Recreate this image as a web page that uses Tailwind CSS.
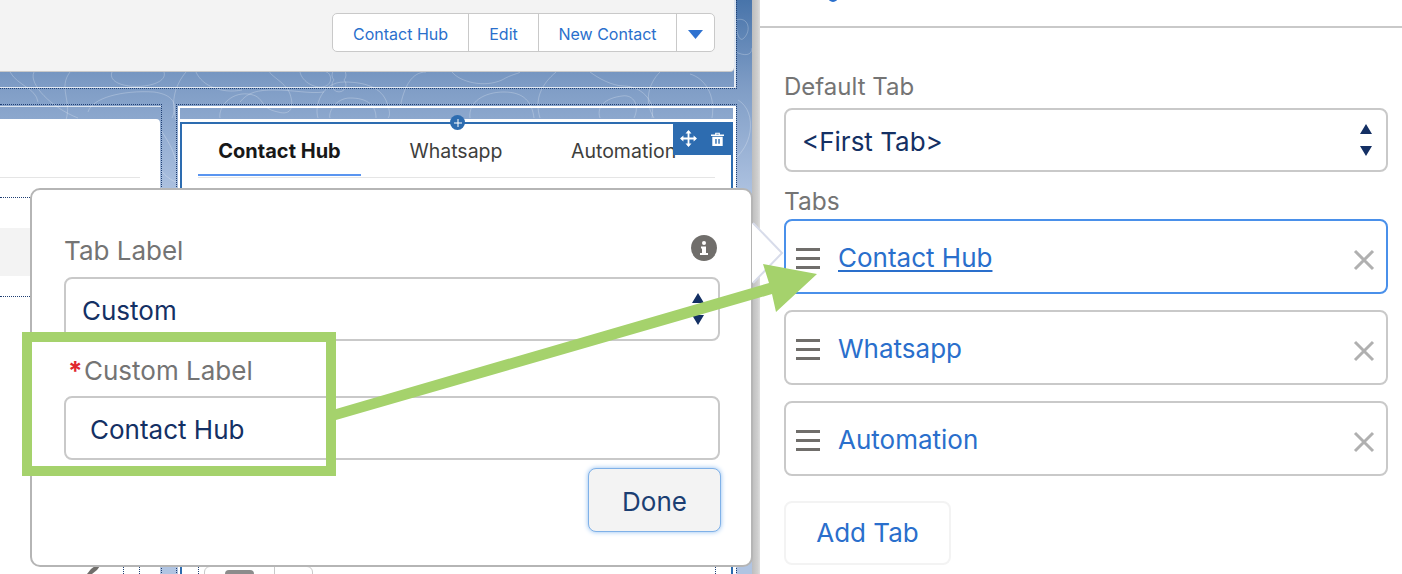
<!DOCTYPE html>
<html lang="en">
<head>
<meta charset="utf-8">
<title>Contact Hub tabs</title>
<script src="https://cdn.jsdelivr.net/npm/@tailwindcss/browser@4"></script>
</head>
<body class="m-0 bg-white">
<div class="relative flex h-[574px] w-[1402px] overflow-hidden bg-white font-['Inter','Liberation_Sans',sans-serif]">

  <!-- Canvas -->
  <main class="relative h-full w-[752px] shrink-0 overflow-hidden bg-[linear-gradient(180deg,#4874aa_0px,#7e9cc5_85px,#b0c4e2_200px,#b0c4e2_100%)]">
    <svg class="absolute left-0 top-0" width="752" height="200" viewBox="0 0 752 200" fill="none" stroke="#ffffff" stroke-opacity=".24" stroke-width="1">
      <path d="M10 72c8 14 26 16 28 30M66 120C72 100 58 88 70 72M34 72c-6 12 18 36 44 46M88 112c4-14 34-22 66-20 14 2 26 8 18 26M112 72c-4 10 12 16 32 14 16-2 22-8 20-14"/>
      <path d="M176 120c-6-20 0-36 10-48M196 72c6 14 26 22 46 18M220 118c-2-10 10-26 28-24 18 2 10 14 30 18 14 4 16-6 12-18-4-12-24-20-20-24"/>
      <path d="M240 102c8-10 18-12 34-12 20 0 36 4 50 2M300 72c2 10 16 18 26 14 8-4 4-14 0-14M334 80a7 7 0 1 0 10 0 7 7 0 1 0-10 0"/>
      <path d="M318 118c-4-12 4-36 26-36 26 0 40 8 44 24 2 6 2 10 0 12M330 118c-2-6 6-20 20-20 16 0 26 6 26 20"/>
      <path d="M400 108c4-22 12-36 26-36M452 72c8 10 32 16 50 8 10-6 16-6 18-8M470 118c-2-16 14-26 34-26 20 0 28 10 30 26"/>
      <path d="M540 118c-6-20 2-34 16-46M590 72c8 6 22 14 34 14 16 0 32 14 28 32M600 118c-4-12 6-20 22-22 12-2 18 10 12 22"/>
      <path d="M660 72c-12 12-16 30-6 46M690 74c14 4 26 20 22 44M736 20c12-4 16 10 8 18-6 6-8-10-8-18M736 52c8 4 16 4 16-4M738 100c10 6 14 18 12 32-2 12-8 20-14 26M161 130c6 10 12 18 15 32M161 170c4 6 10 10 15 12"/>
    </svg>

    <div class="relative h-[89px] w-[737px] border-r border-b border-dotted border-[#1f3f73]">
      <div class="h-[88px] border-r-2 border-b border-white/80">
        <header class="flex h-[72px] justify-end rounded-br-[4px] border-b border-[#c9c9c9] bg-[#f3f3f3] pr-[19px] pt-[13px]">
          <div class="flex h-[39px] overflow-hidden rounded-[5px] border border-[#c9c9c9] bg-white text-[16px] text-[#2a6fcc]">
            <button class="w-[136px] border-r border-[#c9c9c9] pt-[2px]">Contact Hub</button>
            <button class="w-[70px] border-r border-[#c9c9c9] pt-[2px]">Edit</button>
            <button class="w-[138px] border-r border-[#c9c9c9] pt-[2px]">New Contact</button>
            <button class="flex w-[37px] items-center justify-center pt-[4px]">
              <svg width="15" height="9" viewBox="0 0 15 9"><path d="M0 0h15L7.500 9z" fill="#2f72d0"/></svg>
            </button>
          </div>
        </header>
      </div>
    </div>

    <div class="relative mt-[15px] flex h-[471px] w-[737px] gap-[14px]">
      <!-- left column -->
      <section class="h-full w-[162px] border-t border-r border-dotted border-[#1f3f73] pt-[1px]">
        <div class="h-full border-t border-white/70 pr-[1px] pt-[12px]">
          <div class="h-full w-[160px] rounded-tr-[4px] bg-white pt-[58px]">
            <div class="h-px w-[140px] bg-[#e5e5e5]"></div>
            <div class="mt-[19px] h-px w-[30px] border-t border-dotted border-[#1f3f73]"></div>
            <div class="mt-[30px] h-[48px] w-[30px] bg-[#f3f3f3]"></div>
            <div class="mt-[20px] h-px w-[30px] border-t border-dotted border-[#1f3f73]"></div>
            <div class="mt-[269px] flex h-[8px] items-start pl-[86px]">
              <svg width="16" height="8" viewBox="0 0 16 8"><path d="M1 8l4-5 4-3 5 0-3 4-5 4z" fill="#706e6b"/></svg>
              <span class="ml-[21px] h-[8px] border-l border-dotted border-[#1f3f73]"></span>
              <span class="ml-[15px] h-[8px] border-l border-dotted border-[#1f3f73]"></span>
            </div>
          </div>
        </div>
      </section>

      <!-- right column -->
      <section class="relative h-full w-[561px] border-t border-r border-l border-dotted border-[#1f3f73] pl-[1px] pt-[1px]">
        <div class="h-full border-t-2 border-l-2 border-r-[3px] border-white pt-[11px]">
          <div class="h-[3px] bg-white"></div>
          <div class="relative h-full border-x-2 border-t-2 border-[#2d6cb0] bg-white">
            <div class="flex h-[53px] w-full items-start pl-[16px] text-[19.5px] leading-[26px] text-[#3e3e3c]">
              <div class="h-[52px] w-[163px] border-b-2 border-[#5a95f0] pt-[14px] text-center text-[20px] font-bold text-[#181818]">Contact Hub</div>
              <div class="h-[52px] w-[190px] pt-[14px] text-center">Whatsapp</div>
              <div class="h-[52px] w-[150px] pl-[20px] pt-[14px] text-left">Automation</div>
            </div>
            <div class="ml-[16px] h-px w-[517px] bg-[#e5e5e5]"></div>

            <div class="absolute right-[-2px] top-[-2px] flex h-[33px] w-[60px] items-center gap-[14px] bg-[#2d6cb0] pl-[7px]">
              <svg width="17" height="17" viewBox="0 0 17 17" fill="none" stroke="#fff" stroke-width="1.8"><path d="M8.500 1.500v14M1.500 8.500h14"/><path d="M8.500 0l3 3.400h-6zM8.500 17l3-3.400h-6zM0 8.500l3.400-3v6zM17 8.500l-3.400-3v6z" fill="#fff" stroke="none"/></svg>
              <svg width="13" height="14" viewBox="0 0 14 15"><path d="M0 2.600h14v1.600H0zM4.500 2.600V0.800h5v1.800H8.300V1.800H5.700v.8zM1.400 5.200h11.200V15H1.400z" fill="#fff"/><path d="M4.600 7.600h1.500v5H4.600zM7.900 7.600h1.500v5H7.900z" fill="#2d6cb0"/></svg>
            </div>
            <div class="absolute left-[268px] top-[-9px] flex h-[15px] w-[15px] items-center justify-center rounded-full bg-[#2d6cb0]">
              <svg width="8" height="8" viewBox="0 0 8 8"><path d="M3.500 0h1v3.500H8v1H4.500V8h-1V4.500H0v-1h3.500z" fill="#fff"/></svg>
            </div>

            <div class="mt-[388px] flex h-[8px] items-start pl-[16px]">
              <span class="h-[8px] border-l border-dotted border-[#1f3f73]"></span>
              <div class="relative ml-[5px] flex h-[10px] w-[109px] rounded-t-[6px] border border-[#c9c9c9] bg-white">
                <span class="ml-[20px] mt-[3px] h-[8px] w-[29px] rounded-t-[4px] bg-[#8c8c8c]"></span>
                <span class="ml-[20px] h-[10px] border-l border-[#c9c9c9]"></span>
              </div>
              <span class="ml-[402px] h-[8px] border-l border-dotted border-[#1f3f73]"></span>
            </div>
          </div>
        </div>
      </section>
    </div>
  </main>

  <!-- Divider -->
  <div class="h-full w-[8px] shrink-0 bg-[linear-gradient(90deg,#bdbdbd,#cfcfcf_70%,#dedede)]"></div>

  <!-- Property panel -->
  <aside class="h-full flex-1 bg-white">
    <div class="relative h-[28px] border-b-2 border-[#c9c9c9]">
      <span class="absolute left-[68px] top-[-3px] h-[5px] w-[10px] rounded-b-full bg-[#2a6fcc]"></span>
    </div>
    <div class="pl-[24px] pr-[14px] pt-[44px] text-[26px] leading-[30px]">
      <label class="block text-[24px] text-[#747474]">Default Tab</label>
      <div class="mt-[6px] flex h-[64px] items-center justify-between rounded-[8px] border-2 border-[#c9c9c9] pl-[16px] pr-[14px] text-[#143064]">
        <span class="mt-[4px]">&lt;First Tab&gt;</span>
        <svg width="12" height="32" viewBox="0 0 12 32" fill="#143064"><path d="M6 0l6 10H0zM6 32L0 22h12z"/></svg>
      </div>
      <label class="mt-[14px] block text-[24.500px] text-[#747474]">Tabs</label>
      <div class="mt-[3px] flex h-[75px] items-center rounded-[8px] border-2 border-[#4a90ea] pl-[10px] pr-[11px]">
        <svg class="mr-[18px] mt-[3px]" width="24" height="21" viewBox="0 0 24 21" fill="#706e6b"><path d="M0 0h24v3H0zM0 9h24v3H0zM0 18h24v3H0z"/></svg>
        <a class="mt-[2px] flex-1 text-[#2a6fcc] underline decoration-2 underline-offset-[3px]">Contact Hub</a>
        <svg class="mt-[7px]" width="22" height="22" viewBox="0 0 22 22" stroke="#b0b0b0" stroke-width="3" fill="none"><path d="M2 2l18 18M20 2L2 20"/></svg>
      </div>
      <div class="mt-[16px] flex h-[75px] items-center rounded-[8px] border-2 border-[#c9c9c9] pl-[10px] pr-[11px]">
        <svg class="mr-[18px] mt-[3px]" width="24" height="21" viewBox="0 0 24 21" fill="#706e6b"><path d="M0 0h24v3H0zM0 9h24v3H0zM0 18h24v3H0z"/></svg>
        <a class="mt-[2px] flex-1 text-[#2a6fcc]">Whatsapp</a>
        <svg class="mt-[7px]" width="22" height="22" viewBox="0 0 22 22" stroke="#b0b0b0" stroke-width="3" fill="none"><path d="M2 2l18 18M20 2L2 20"/></svg>
      </div>
      <div class="mt-[16px] flex h-[75px] items-center rounded-[8px] border-2 border-[#c9c9c9] pl-[10px] pr-[11px]">
        <svg class="mr-[18px] mt-[3px]" width="24" height="21" viewBox="0 0 24 21" fill="#706e6b"><path d="M0 0h24v3H0zM0 9h24v3H0zM0 18h24v3H0z"/></svg>
        <a class="mt-[2px] flex-1 text-[#2a6fcc]">Automation</a>
        <svg class="mt-[7px]" width="22" height="22" viewBox="0 0 22 22" stroke="#b0b0b0" stroke-width="3" fill="none"><path d="M2 2l18 18M20 2L2 20"/></svg>
      </div>
      <button class="mt-[25px] h-[64px] w-[167px] rounded-[8px] border-2 border-[#f3f3f3] bg-white text-[#2a6fcc]">Add Tab</button>
    </div>
  </aside>

  <!-- Popover -->
  <div class="absolute left-[30px] top-[188px] h-[379px] w-[723px] rounded-[10px] border-2 border-[#b5b5b5] bg-white pl-[32px] pr-[31px] pt-[46px] text-[26px] leading-[30px]">
    <div class="flex h-[30px] items-start justify-between">
      <label class="text-[#747474]">Tab Label</label>
      <span class="mr-[3px] mt-[-1px] flex h-[26px] w-[26px] items-center justify-center rounded-full bg-[#706e6b]">
        <svg width="8" height="14" viewBox="0 0 8 14" fill="#fff"><circle cx="4" cy="2" r="2"/><path d="M1 5.500h5V12h2v2H0v-2h2V7.500H1z"/></svg>
      </span>
    </div>
    <div class="mt-[11px] flex h-[64px] items-center justify-between rounded-[8px] border-2 border-[#c9c9c9] pl-[16px] pr-[14px] text-[#143064]">
      <span class="mt-[3px]">Custom</span>
      <svg width="12" height="32" viewBox="0 0 12 32" fill="#143064"><path d="M6 0l6 10H0zM6 32L0 22h12z"/></svg>
    </div>
    <label class="mt-[15px] block text-[#747474]"><span class="ml-[4px] inline-block w-[16px] font-bold text-[#e0282e]">*</span>Custom Label</label>
    <div class="mt-[10px] flex h-[64px] items-center rounded-[8px] border-2 border-[#c9c9c9] pl-[24px] text-[#143064]"><span class="mt-[4px]">Contact Hub</span></div>
    <div class="mr-[-1px] mt-[8px] flex justify-end">
      <button class="h-[64px] w-[133px] rounded-[8px] border border-[#7fb1e8] bg-[#f3f3f3] pt-[3px] text-[#1b3e72] shadow-[0_0_5px_#8fbdf0]">Done</button>
    </div>
  </div>

  <!-- Annotation: popover nub, green frame and arrow -->
  <svg class="pointer-events-none absolute left-0 top-0" width="1402" height="574" viewBox="0 0 1402 574">
    <path d="M752 223l30 30-30 30z" fill="#fff"/>
    <path d="M753 223l29 30-29 30" fill="none" stroke="#d8dcea" stroke-width="2"/>
    <rect x="27" y="337" width="304" height="134" fill="none" stroke="#a5d26c" stroke-width="10"/>
    <path d="M336 409L769 283L763 264L817 274L776 312L772 294L336 420z" fill="#a5d26c"/>
  </svg>
</div>
</body>
</html>
